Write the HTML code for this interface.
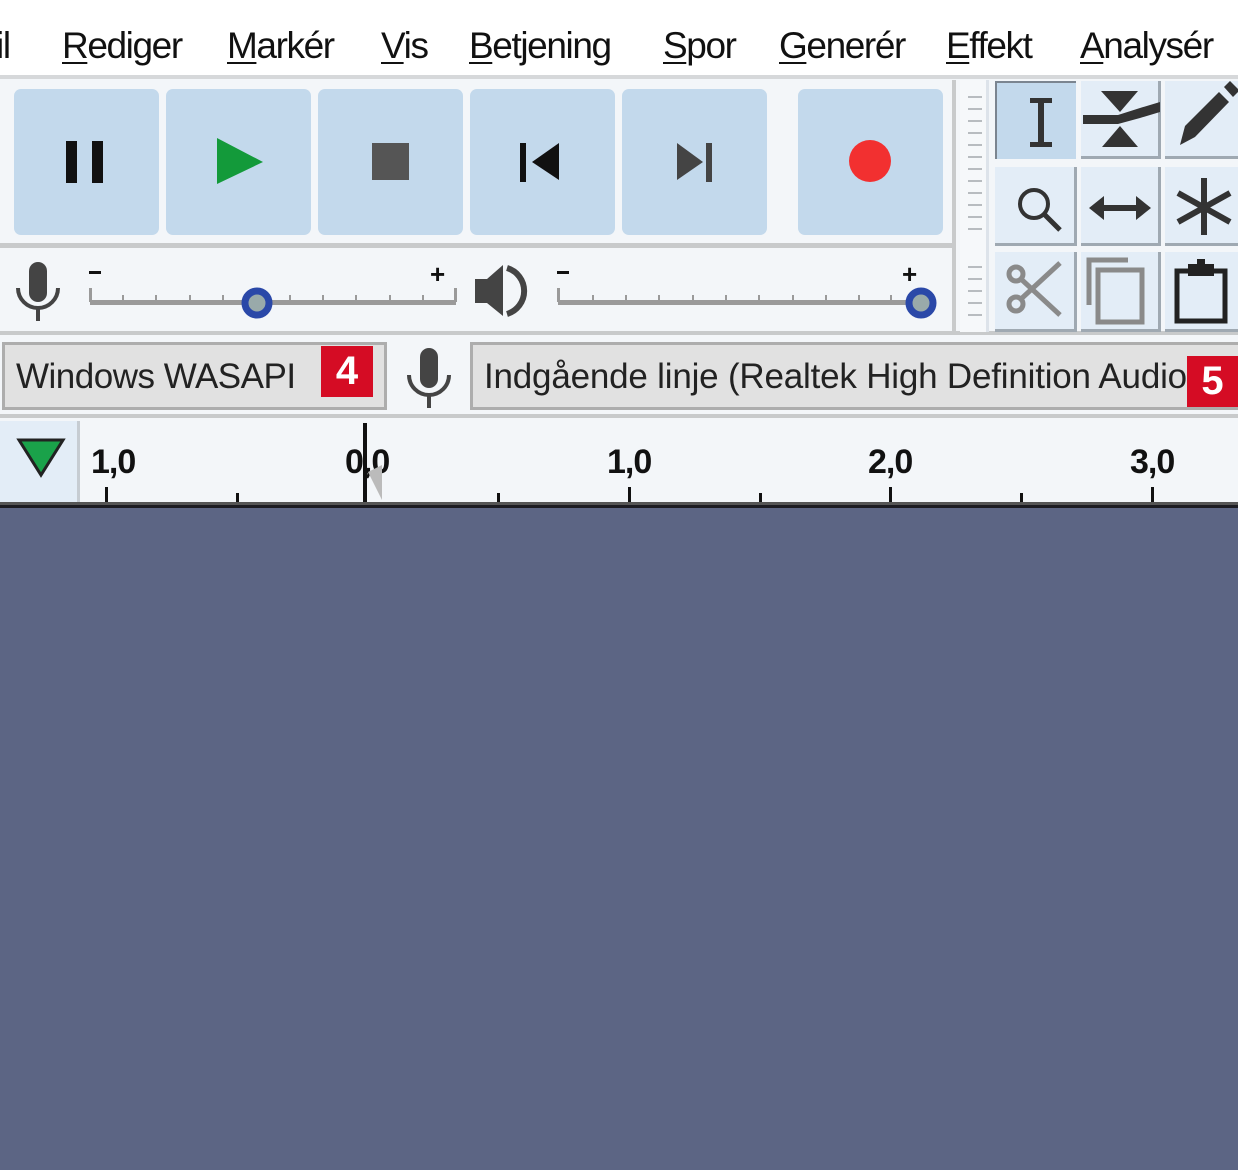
<!DOCTYPE html>
<html><head><meta charset="utf-8"><style>
*{margin:0;padding:0;box-sizing:border-box}
body{width:1238px;height:1170px;overflow:hidden;background:#5c6584;position:relative;font-family:"Liberation Sans","DejaVu Sans",sans-serif}
.a{position:absolute}
.menu{left:0;top:0;width:1238px;height:76px;background:#fff}
.mi{position:absolute;top:25px;font-size:37px;letter-spacing:-1.4px;color:#111}
.mi u{text-decoration-thickness:2px;text-underline-offset:4px}
.tb{left:0;top:76px;width:1238px;height:430px;background:#f3f6f9}
.btn{position:absolute;top:89px;width:145px;height:146px;background:#c3d9ec;border-radius:7px}
.cell{position:absolute;background:#e3edf7;border-right:3px solid #9fa9b2;border-bottom:3px solid #9fa9b2}
.box{position:absolute;background:#e1e1e1;border:3px solid #adadad;overflow:hidden;white-space:nowrap;font-size:35px;color:#222;letter-spacing:-.5px}
.badge{position:absolute;background:#d50c24;color:#fff;font-weight:bold;font-size:40px;text-align:center;line-height:51px}
.lbl{position:absolute;top:443px;font-weight:bold;font-size:34px;color:#111;letter-spacing:-1px}
.tick{position:absolute;width:3px;background:#111}
</style></head><body>
<div class="a menu">
<span class="mi" style="left:-4px">il</span>
<span class="mi" style="left:62px"><u>R</u>ediger</span>
<span class="mi" style="left:227px"><u>M</u>arkér</span>
<span class="mi" style="left:381px"><u>V</u>is</span>
<span class="mi" style="left:469px"><u>B</u>etjening</span>
<span class="mi" style="left:663px"><u>S</u>por</span>
<span class="mi" style="left:779px"><u>G</u>enerér</span>
<span class="mi" style="left:946px"><u>E</u>ffekt</span>
<span class="mi" style="left:1080px"><u>A</u>nalysér</span>
</div>
<div class="a tb"></div>
<div class="a" style="left:0;top:75px;width:1238px;height:4px;background:#d6d8da"></div>
<div class="btn" style="left:14px"></div>
<div class="btn" style="left:166px"></div>
<div class="btn" style="left:318px"></div>
<div class="btn" style="left:470px"></div>
<div class="btn" style="left:622px"></div>
<div class="btn" style="left:798px"></div>
<div class="a" style="left:66px;top:141px;width:11px;height:42px;background:#111"></div>
<div class="a" style="left:92px;top:141px;width:11px;height:42px;background:#111"></div>
<svg class="a" style="left:0;top:0" width="1238" height="510">
<polygon points="217,138 217,184 263,162" fill="#139a3a"/>
<rect x="372" y="143" width="37" height="37" fill="#555"/>
<rect x="520" y="143" width="6" height="39" fill="#111"/>
<polygon points="559,143 559,180 532,162" fill="#111"/>
<polygon points="677,143 677,180 703,162" fill="#444"/>
<rect x="706" y="143" width="6" height="39" fill="#444"/>
<circle cx="870" cy="161" r="21" fill="#f23030"/>
<rect x="0" y="243" width="955" height="5" fill="#c8cacb"/>
<rect x="0" y="331" width="1238" height="4" fill="#c8cacb"/>
<rect x="952" y="80" width="4" height="252" fill="#c8cacb"/>
<rect x="986" y="80" width="3" height="252" fill="#dde3ea"/>
<rect x="960" y="80" width="26" height="252" fill="#f6f8fa"/>
<g fill="#b8bcc0">
<rect x="968" y="96" width="14" height="2"/><rect x="968" y="108" width="14" height="2"/><rect x="968" y="120" width="14" height="2"/><rect x="968" y="132" width="14" height="2"/><rect x="968" y="144" width="14" height="2"/><rect x="968" y="156" width="14" height="2"/><rect x="968" y="168" width="14" height="2"/><rect x="968" y="180" width="14" height="2"/><rect x="968" y="192" width="14" height="2"/><rect x="968" y="204" width="14" height="2"/><rect x="968" y="216" width="14" height="2"/><rect x="968" y="228" width="14" height="2"/>
<rect x="968" y="266" width="14" height="2"/><rect x="968" y="278" width="14" height="2"/><rect x="968" y="290" width="14" height="2"/><rect x="968" y="302" width="14" height="2"/><rect x="968" y="314" width="14" height="2"/>
</g>
</svg>
<div class="cell" style="left:995px;top:81px;width:81px;height:78px;background:#c3d9ec;border:2px solid #7b8590;border-width:2px 0 0 2px"></div>
<div class="cell" style="left:1081px;top:81px;width:80px;height:78px"></div>
<div class="cell" style="left:1165px;top:81px;width:76px;height:78px"></div>
<div class="cell" style="left:995px;top:167px;width:82px;height:79px"></div>
<div class="cell" style="left:1081px;top:167px;width:80px;height:79px"></div>
<div class="cell" style="left:1165px;top:167px;width:76px;height:79px"></div>
<div class="cell" style="left:995px;top:252px;width:82px;height:80px"></div>
<div class="cell" style="left:1081px;top:252px;width:80px;height:80px"></div>
<div class="cell" style="left:1165px;top:252px;width:76px;height:80px"></div>
<svg class="a" style="left:0;top:0" width="1238" height="510">
<g fill="#333" stroke="none">
<rect x="1030" y="98" width="22" height="5"/><rect x="1030" y="142" width="22" height="5"/><rect x="1038" y="98" width="6" height="49"/>
<polygon points="1101,91 1138,91 1120,112"/><polygon points="1102,147 1138,147 1120,126"/>
<polygon points="1083,115 1118,115 1140,108 1160,102 1160,112 1140,118 1118,124 1083,124"/>
<polygon points="1180,145 1185,126 1219,92 1229,102 1195,137"/><polygon points="1224,87 1230,81 1238,89 1238,92 1233,97"/>
</g>
<g fill="none" stroke="#333">
<circle cx="1034" cy="204" r="14" stroke-width="4"/><line x1="1044" y1="214" x2="1060" y2="230" stroke-width="5"/>
<line x1="1100" y1="208" x2="1140" y2="208" stroke-width="6"/>
<line x1="1204" y1="178" x2="1204" y2="235" stroke-width="6"/><line x1="1178" y1="193" x2="1230" y2="222" stroke-width="6"/><line x1="1178" y1="222" x2="1230" y2="193" stroke-width="6"/>
</g>
<polygon points="1089,208 1104,196 1104,220" fill="#333"/><polygon points="1151,208 1136,196 1136,220" fill="#333"/>
<g fill="none" stroke="#8a8a8a" stroke-width="5">
<circle cx="1016" cy="274" r="7"/><circle cx="1016" cy="304" r="7"/>
<line x1="1021" y1="279" x2="1060" y2="315"/><line x1="1021" y1="299" x2="1060" y2="263"/>
<polyline points="1089,305 1089,260 1128,260"/><rect x="1098" y="270" width="44" height="52"/>
</g>
<g fill="none" stroke="#222" stroke-width="5"><rect x="1177" y="271" width="48" height="50"/></g>
<rect x="1188" y="264" width="26" height="12" fill="#222"/><rect x="1197" y="259" width="8" height="8" fill="#222"/>
<rect x="29" y="262" width="18" height="40" rx="9" fill="#444"/>
<path d="M18,288 a20,20 0 0 0 40,0" fill="none" stroke="#444" stroke-width="4"/>
<rect x="36" y="307" width="4" height="14" fill="#444"/>
<rect x="90" y="300" width="366" height="5" fill="#9a9a9a"/>
<g fill="#9a9a9a"><rect x="89" y="288" width="3" height="14"/><rect x="454" y="288" width="3" height="14"/>
<rect x="122" y="295" width="2" height="7"/><rect x="155" y="295" width="2" height="7"/><rect x="189" y="295" width="2" height="7"/><rect x="222" y="295" width="2" height="7"/><rect x="289" y="295" width="2" height="7"/><rect x="322" y="295" width="2" height="7"/><rect x="355" y="295" width="2" height="7"/><rect x="389" y="295" width="2" height="7"/><rect x="422" y="295" width="2" height="7"/></g>
<rect x="89" y="271" width="12" height="3" fill="#111"/>
<text x="430" y="283" font-size="26" font-weight="bold" fill="#111" font-family="Liberation Sans">+</text>
<circle cx="257" cy="303" r="12" fill="#9aa" stroke="#2a48a8" stroke-width="7"/>
<polygon points="475,279 487,279 503,265 503,316 487,303 475,303" fill="#444"/>
<path d="M507,268 a24,24 0 0 1 0,46" fill="none" stroke="#444" stroke-width="6"/>
<rect x="558" y="300" width="362" height="5" fill="#9a9a9a"/>
<g fill="#9a9a9a"><rect x="557" y="288" width="3" height="14"/>
<rect x="592" y="295" width="2" height="7"/><rect x="625" y="295" width="2" height="7"/><rect x="658" y="295" width="2" height="7"/><rect x="692" y="295" width="2" height="7"/><rect x="725" y="295" width="2" height="7"/><rect x="758" y="295" width="2" height="7"/><rect x="792" y="295" width="2" height="7"/><rect x="825" y="295" width="2" height="7"/><rect x="858" y="295" width="2" height="7"/><rect x="890" y="295" width="2" height="7"/></g>
<rect x="557" y="271" width="12" height="3" fill="#111"/>
<text x="902" y="283" font-size="26" font-weight="bold" fill="#111" font-family="Liberation Sans">+</text>
<circle cx="921" cy="303" r="12" fill="#9aa" stroke="#2a48a8" stroke-width="7"/>
<rect x="420" y="348" width="18" height="40" rx="9" fill="#444"/>
<path d="M409,375 a20,20 0 0 0 40,0" fill="none" stroke="#444" stroke-width="4"/>
<rect x="427" y="394" width="4" height="14" fill="#444"/>
<rect x="0" y="414" width="1238" height="4" fill="#c8cacb"/>
</svg>
<div class="box" style="left:2px;top:342px;width:385px;height:68px;padding:12px 0 0 11px">Windows WASAPI</div>
<div class="badge" style="left:321px;top:346px;width:52px;height:51px">4</div>
<div class="box" style="left:470px;top:342px;width:780px;height:68px;padding:12px 0 0 11px;letter-spacing:-.2px">Indgående linje (Realtek High Definition Audio)</div>
<div class="badge" style="left:1187px;top:356px;width:51px;height:51px">5</div>
<div class="a" style="left:0;top:421px;width:80px;height:81px;background:#e3edf7;border-right:3px solid #c6ccd2"></div>
<svg class="a" style="left:0;top:0" width="100" height="510"><polygon points="19,440 63,440 41,475" fill="#1aa24a" stroke="#222" stroke-width="3"/></svg>
<div class="lbl" style="left:91px">1,0</div>
<div class="lbl" style="left:345px">0,0</div>
<div class="lbl" style="left:607px">1,0</div>
<div class="lbl" style="left:868px">2,0</div>
<div class="lbl" style="left:1130px">3,0</div>
<div class="tick" style="left:105px;top:487px;height:15px"></div>
<div class="tick" style="left:236px;top:493px;height:9px"></div>
<div class="tick" style="left:497px;top:493px;height:9px"></div>
<div class="tick" style="left:628px;top:487px;height:15px"></div>
<div class="tick" style="left:759px;top:493px;height:9px"></div>
<div class="tick" style="left:889px;top:487px;height:15px"></div>
<div class="tick" style="left:1020px;top:493px;height:9px"></div>
<div class="tick" style="left:1151px;top:487px;height:15px"></div>
<svg class="a" style="left:0;top:0" width="1238" height="510"><polygon points="368,472 382,465 382,500" fill="#bbb"/></svg>
<div class="a" style="left:363px;top:423px;width:4px;height:80px;background:#111"></div>
<div class="a" style="left:0;top:502px;width:1238px;height:3px;background:#555"></div>
<div class="a" style="left:0;top:505px;width:1238px;height:3px;background:#1c1c22"></div>
</body></html>
